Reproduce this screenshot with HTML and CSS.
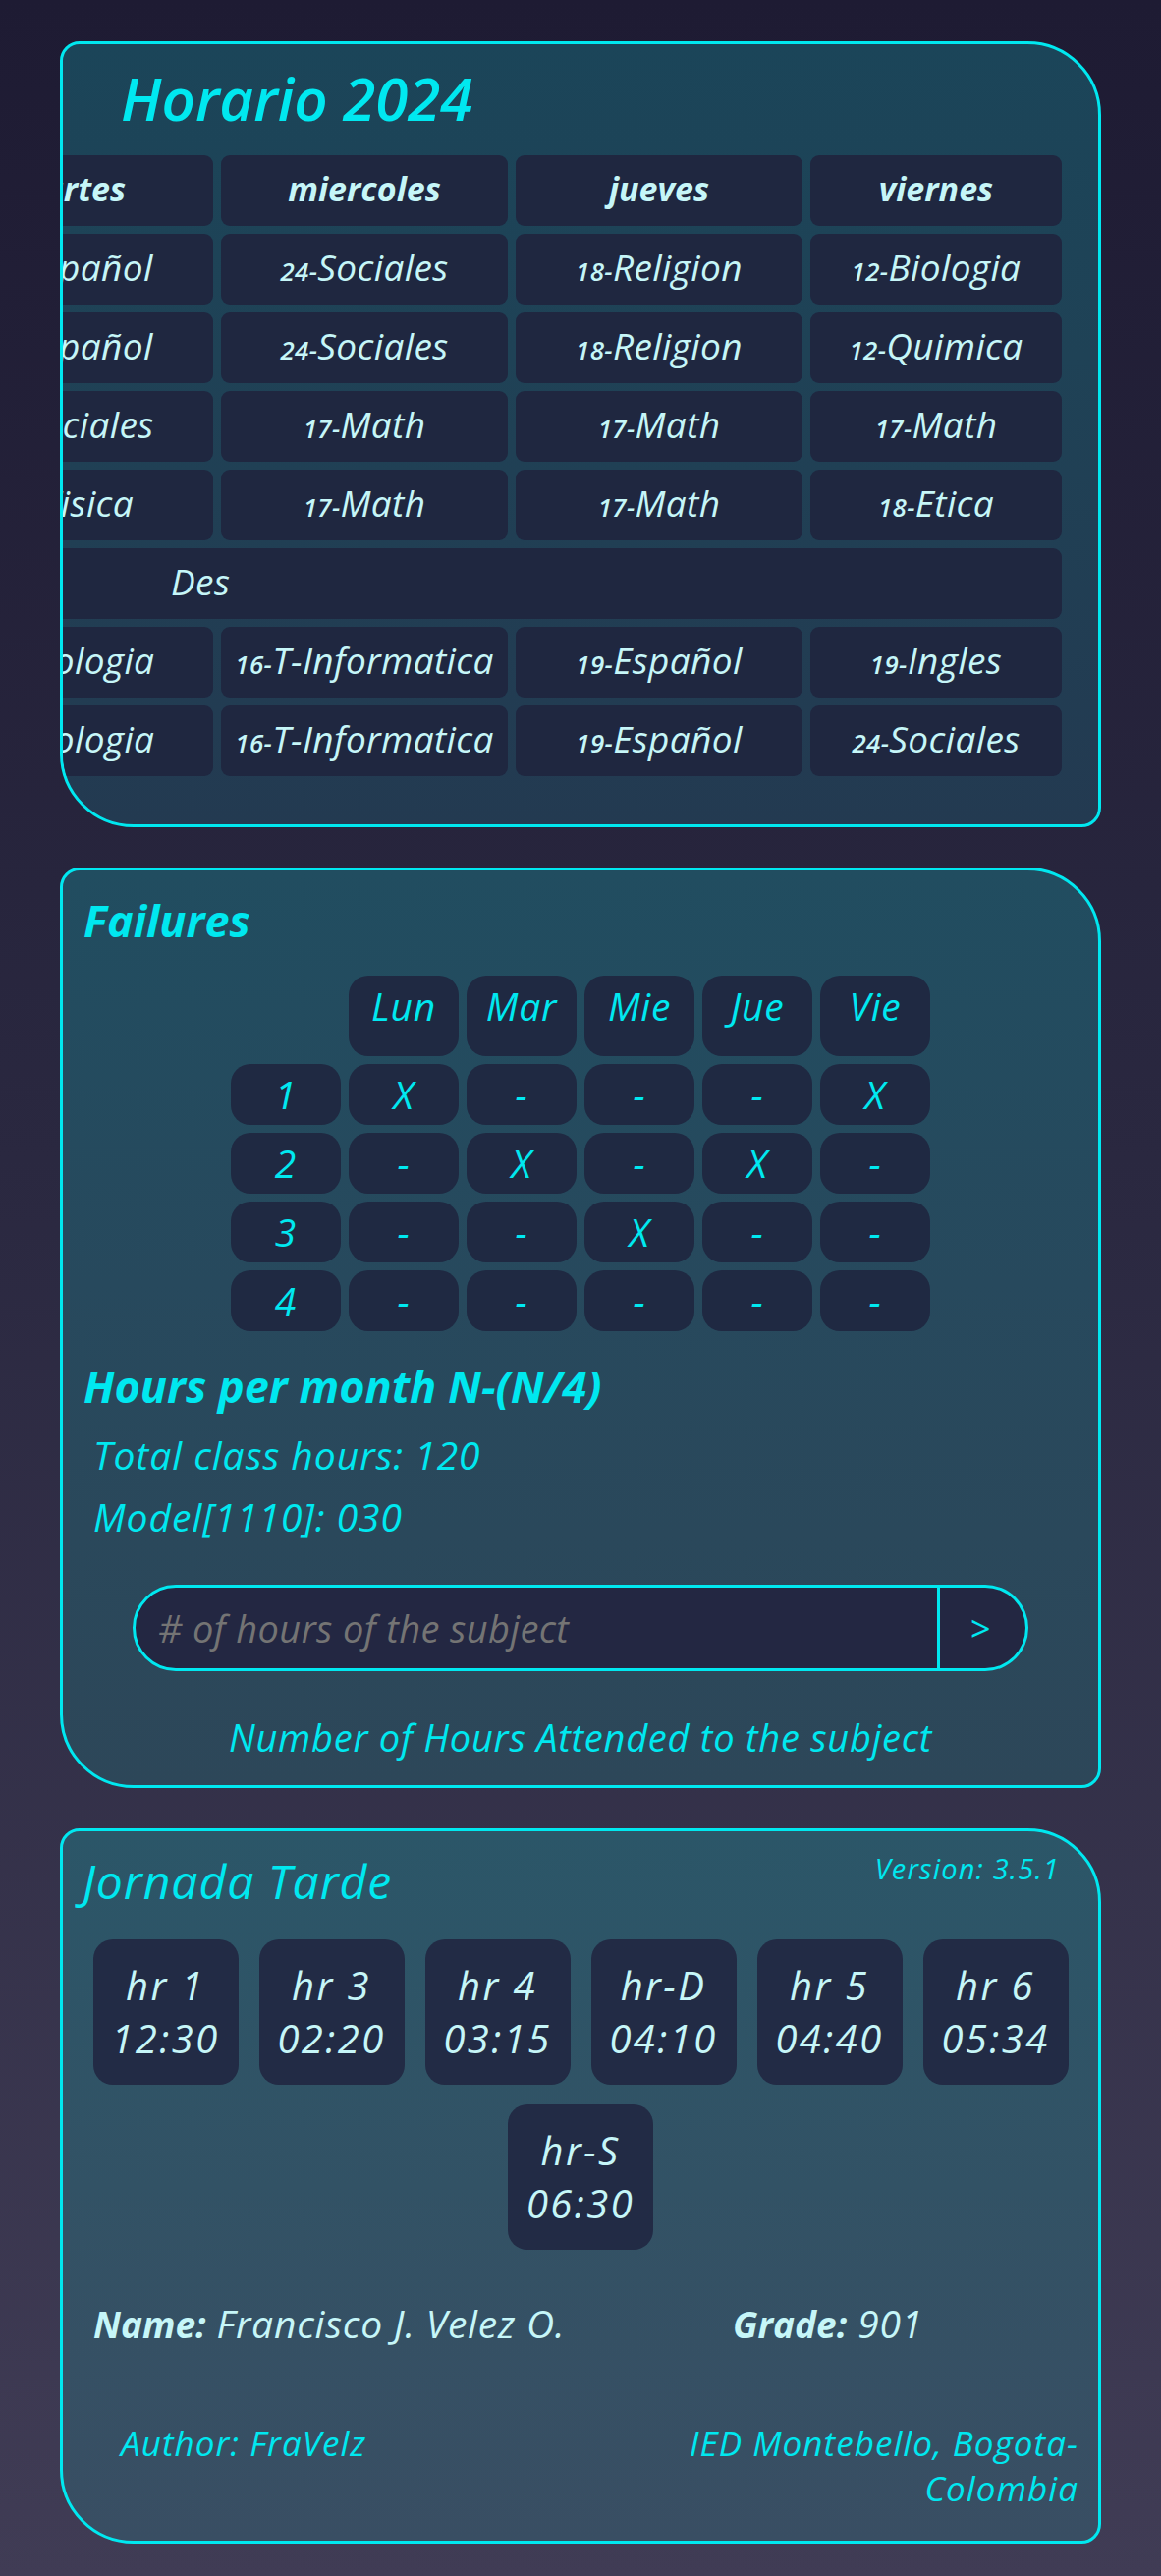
FILE: index.html
```html
<!DOCTYPE html>
<html lang="es">
<head>
<meta charset="utf-8">
<title>Horario 2024</title>
<link rel="stylesheet" href="styles.css">
</head>
<body>
<main class="page">
  <section class="card card--schedule">
    <h1 class="schedule-title">Horario 2024</h1>
    <div class="schedule-wrap">
      <div class="schedule">
        <div class="cell cell--head">martes</div>
        <div class="cell cell--head">miercoles</div>
        <div class="cell cell--head">jueves</div>
        <div class="cell cell--head">viernes</div>

        <div class="cell"><span class="num">19-</span>Español</div>
        <div class="cell"><span class="num">24-</span>Sociales</div>
        <div class="cell"><span class="num">18-</span>Religion</div>
        <div class="cell"><span class="num">12-</span>Biologia</div>

        <div class="cell"><span class="num">19-</span>Español</div>
        <div class="cell"><span class="num">24-</span>Sociales</div>
        <div class="cell"><span class="num">18-</span>Religion</div>
        <div class="cell"><span class="num">12-</span>Quimica</div>

        <div class="cell"><span class="num">24-</span>Sociales</div>
        <div class="cell"><span class="num">17-</span>Math</div>
        <div class="cell"><span class="num">17-</span>Math</div>
        <div class="cell"><span class="num">17-</span>Math</div>

        <div class="cell"><span class="num">20-</span>Fisica</div>
        <div class="cell"><span class="num">17-</span>Math</div>
        <div class="cell"><span class="num">17-</span>Math</div>
        <div class="cell"><span class="num">18-</span>Etica</div>

        <div class="cell cell--break">Des</div>

        <div class="cell"><span class="num">12-</span>Biologia</div>
        <div class="cell"><span class="num">16-</span>T-Informatica</div>
        <div class="cell"><span class="num">19-</span>Español</div>
        <div class="cell"><span class="num">19-</span>Ingles</div>

        <div class="cell"><span class="num">12-</span>Biologia</div>
        <div class="cell"><span class="num">16-</span>T-Informatica</div>
        <div class="cell"><span class="num">19-</span>Español</div>
        <div class="cell"><span class="num">24-</span>Sociales</div>
      </div>
    </div>
  </section>

  <section class="card card--failures">
    <h2 class="card-title">Failures</h2>
    <div class="fails">
      <div class="fcell fcell--empty"></div>
      <div class="fcell fcell--head">Lun</div>
      <div class="fcell fcell--head">Mar</div>
      <div class="fcell fcell--head">Mie</div>
      <div class="fcell fcell--head">Jue</div>
      <div class="fcell fcell--head">Vie</div>

      <div class="fcell">1</div>
      <div class="fcell">X</div>
      <div class="fcell">-</div>
      <div class="fcell">-</div>
      <div class="fcell">-</div>
      <div class="fcell">X</div>

      <div class="fcell">2</div>
      <div class="fcell">-</div>
      <div class="fcell">X</div>
      <div class="fcell">-</div>
      <div class="fcell">X</div>
      <div class="fcell">-</div>

      <div class="fcell">3</div>
      <div class="fcell">-</div>
      <div class="fcell">-</div>
      <div class="fcell">X</div>
      <div class="fcell">-</div>
      <div class="fcell">-</div>

      <div class="fcell">4</div>
      <div class="fcell">-</div>
      <div class="fcell">-</div>
      <div class="fcell">-</div>
      <div class="fcell">-</div>
      <div class="fcell">-</div>
    </div>

    <h2 class="card-title card-title--hours">Hours per month N-(N/4)</h2>
    <p class="info">Total class hours: 120</p>
    <p class="info">Model[1110]: 030</p>

    <form class="hours-form">
      <input class="hours-input" type="text" placeholder="# of hours of the subject">
      <button class="hours-btn" type="button">&gt;</button>
    </form>

    <p class="hours-result">Number of Hours Attended to the subject</p>
  </section>

  <section class="card card--shift">
    <div class="shift-head">
      <h2 class="card-title card-title--light">Jornada Tarde</h2>
      <span class="version">Version: 3.5.1</span>
    </div>

    <div class="hours">
      <div class="hour">hr 1<br>12:30</div>
      <div class="hour">hr 3<br>02:20</div>
      <div class="hour">hr 4<br>03:15</div>
      <div class="hour">hr-D<br>04:10</div>
      <div class="hour">hr 5<br>04:40</div>
      <div class="hour">hr 6<br>05:34</div>
      <div class="hour">hr-S<br>06:30</div>
    </div>

    <div class="student">
      <p class="student-item"><b>Name:</b> Francisco J. Velez O.</p>
      <p class="student-item"><b>Grade:</b> 901</p>
    </div>

    <footer class="credits">
      <span class="author">Author: FraVelz</span>
      <span class="school">IED Montebello, Bogota-Colombia</span>
    </footer>
  </section>
</main>
</body>
</html>
```

FILE: styles.css
```css
* {
  box-sizing: border-box;
}

html, body {
  margin: 0;
  padding: 0;
}

body {
  min-height: 2622px;
  background: linear-gradient(180deg, #1e1b33 0%, #2a2840 45%, #403c55 100%);
  font-family: "Open Sans", "Noto Sans", sans-serif;
  font-style: italic;
  color: #c6f6f8;
}

.page {
  padding: 42px 61px 34px;
  display: flex;
  flex-direction: column;
  gap: 41px;
}

.card {
  border: 3px solid #00e8f0;
  border-radius: 20px 75px 20px 75px;
  overflow: hidden;
}

.card--schedule {
  background: linear-gradient(180deg, #1b4559 0%, #1f4256 40%, #233a51 100%);
  padding: 19px 37px 49px 21px;
}

.card--failures {
  background: linear-gradient(180deg, #214d60 0%, #27495d 45%, #2d4759 100%);
  padding: 22px 21px 17px 21px;
}

.card--shift {
  background: linear-gradient(180deg, #2b5668 0%, #325265 50%, #394e63 100%);
  padding: 22px 20px 30px 20px;
}

/* ---------- schedule ---------- */
.schedule-title {
  margin: 0 0 22px 38px;
  font-size: 60px;
  line-height: 72px;
  font-weight: 600;
  color: #00e8f0;
}

.schedule-wrap {
  display: flex;
  justify-content: flex-end;
}

.schedule {
  display: grid;
  grid-template-columns: 292px 292px 292px 256px;
  grid-auto-rows: 72px;
  gap: 8px;
  flex-shrink: 0;
}

.cell {
  background: #1f2740;
  border-radius: 9px;
  font-size: 37px;
  letter-spacing: 0.01em;
  line-height: 48px;
  padding: 10px 0 14px;
  text-align: center;
  white-space: nowrap;
}

.cell--head {
  font-size: 34px;
  letter-spacing: 0;
  font-weight: 700;
}

.cell--break {
  grid-column: 1 / -1;
  text-align: left;
  padding-left: 249px;
}

.num {
  font-size: 0.7em;
  font-weight: 600;
}

/* ---------- failures ---------- */
.card-title {
  margin: 0;
  font-size: 45px;
  line-height: 58px;
  font-weight: 700;
  color: #00e8f0;
}

.fails {
  margin: 27px auto 0;
  display: grid;
  grid-template-columns: repeat(6, 112px);
  grid-auto-rows: auto;
  gap: 8px;
  justify-content: center;
}

.fcell {
  background: #1f2942;
  border-radius: 20px;
  height: 62px;
  line-height: 62px;
  font-size: 39px;
  letter-spacing: 0.02em;
  text-align: center;
  color: #00e8f0;
}

.fcell--head {
  height: 82px;
  padding-bottom: 20px;
}

.fcell--empty {
  background: transparent;
  height: 82px;
}

.card-title--hours {
  margin-top: 27px;
}

.info {
  margin: 0 0 0 10px;
  font-size: 39px;
  letter-spacing: 0.025em;
  line-height: 63px;
  color: #00e8f0;
}

.info:first-of-type {
  margin-top: 9px;
}

.hours-form {
  margin: 38px auto 0;
  width: 912px;
  height: 88px;
  display: flex;
}

.hours-input {
  flex: 1;
  min-width: 0;
  height: 88px;
  border: 3px solid #00e8f0;
  border-radius: 44px 0 0 44px;
  background: #232742;
  padding: 0 20px 0 23px;
  font-family: inherit;
  font-style: italic;
  font-size: 38px;
  letter-spacing: 0.01em;
  color: #c6f6f8;
  outline: none;
}

.hours-input::placeholder {
  color: #747474;
  opacity: 1;
}

.hours-btn {
  width: 90px;
  height: 88px;
  border: 3px solid #00e8f0;
  border-left: 0;
  border-radius: 0 44px 44px 0;
  background: #232742;
  color: #00e8f0;
  font-family: inherit;
  font-style: italic;
  font-size: 36px;
  padding: 0 6px 0 0;
}

.hours-result {
  margin: 36px 0 0;
  text-align: center;
  font-size: 38px;
  letter-spacing: 0.02em;
  line-height: 63px;
  color: #00e8f0;
}

/* ---------- shift ---------- */
.shift-head {
  display: flex;
  justify-content: space-between;
  align-items: flex-start;
}

.card-title--light {
  font-size: 48px;
  letter-spacing: 0.02em;
  font-weight: 400;
}

.version {
  margin: -3px 19px 0 0;
  font-size: 29px;
  letter-spacing: 0.04em;
  line-height: 38px;
  color: #00e8f0;
}

.hours {
  margin-top: 30px;
  display: flex;
  flex-wrap: wrap;
  justify-content: center;
  gap: 20px 21px;
}

.hour {
  width: 148px;
  padding: 20px 0;
  background: #222b45;
  border-radius: 20px;
  font-size: 40px;
  letter-spacing: 0.06em;
  line-height: 54px;
  text-align: center;
}

.student {
  margin: 46px 0 0 11px;
  display: grid;
  grid-template-columns: 651px 1fr;
}

.student-item {
  margin: 0;
  font-size: 39px;
  letter-spacing: 0.02em;
  line-height: 58px;
}

.student-item b {
  font-size: 37px;
  letter-spacing: 0;
  font-weight: 700;
}

.credits {
  margin-top: 69px;
  display: flex;
  justify-content: space-between;
  align-items: flex-start;
  font-size: 35px;
  letter-spacing: 0.03em;
  line-height: 46px;
  color: #00e8f0;
}

.author {
  margin-left: 39px;
}

.school {
  width: 400px;
  text-align: right;
}
```
